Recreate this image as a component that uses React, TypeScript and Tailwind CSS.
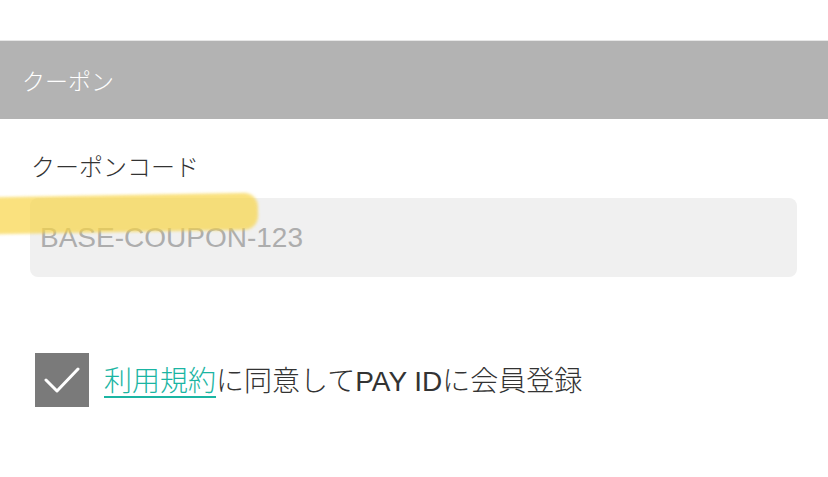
export default function App() {
  const font = { fontFamily: '"Noto Sans CJK JP", "Liberation Sans", sans-serif' };
  const latin = { fontFamily: '"Liberation Sans", "Noto Sans CJK JP", sans-serif' };

  return (
    <div className="relative w-[828px] h-[477px] bg-white overflow-hidden" style={font}>
      <div className="h-[41px] border-b border-[#e6e6e6]" />

      {/* Section header */}
      <div className="h-[78px] bg-[#b3b3b3] flex items-center pl-[22px]">
        <span className="text-[23px] text-white font-light">クーポン</span>
      </div>

      {/* Coupon code field */}
      <div className="px-[30px] pt-[32px]">
        <div className="pl-px text-[24px] leading-[30px] text-[#333] font-light">クーポンコード</div>
        <div className="mt-[17px] h-[79px] w-[767px] rounded-[8px] bg-[#f0f0f0] flex items-center px-[10px]">
          <span className="text-[28px] text-[#adadad]" style={latin}>BASE-COUPON-123</span>
        </div>
      </div>

      {/* Agreement */}
      <div className="flex items-center pl-[35px] mt-[76px]">
        <div className="w-[54px] h-[54px] bg-[#7a7a7a] flex items-center justify-center">
          <svg width="36" height="28" viewBox="0 0 36 28" fill="none">
            <path d="M2 14 L13 25 L34 3" stroke="white" strokeWidth="3" strokeLinecap="round" strokeLinejoin="round" />
          </svg>
        </div>
        <div className="ml-[15px] text-[28px] text-[#333] font-light">
          <span className="text-[#1bb5a3] underline underline-offset-[5px] decoration-[2px]">利用規約</span>
          に同意して<span style={latin}>PAY ID</span>に会員登録
        </div>
      </div>

      {/* Highlighter mark */}
      <div className="absolute left-[-10px] top-[195px] w-[268px] h-[37px] bg-[#f8d548] opacity-70 rounded-r-[14px] blur-[1.5px] -rotate-[1deg]" />
    </div>
  );
}
